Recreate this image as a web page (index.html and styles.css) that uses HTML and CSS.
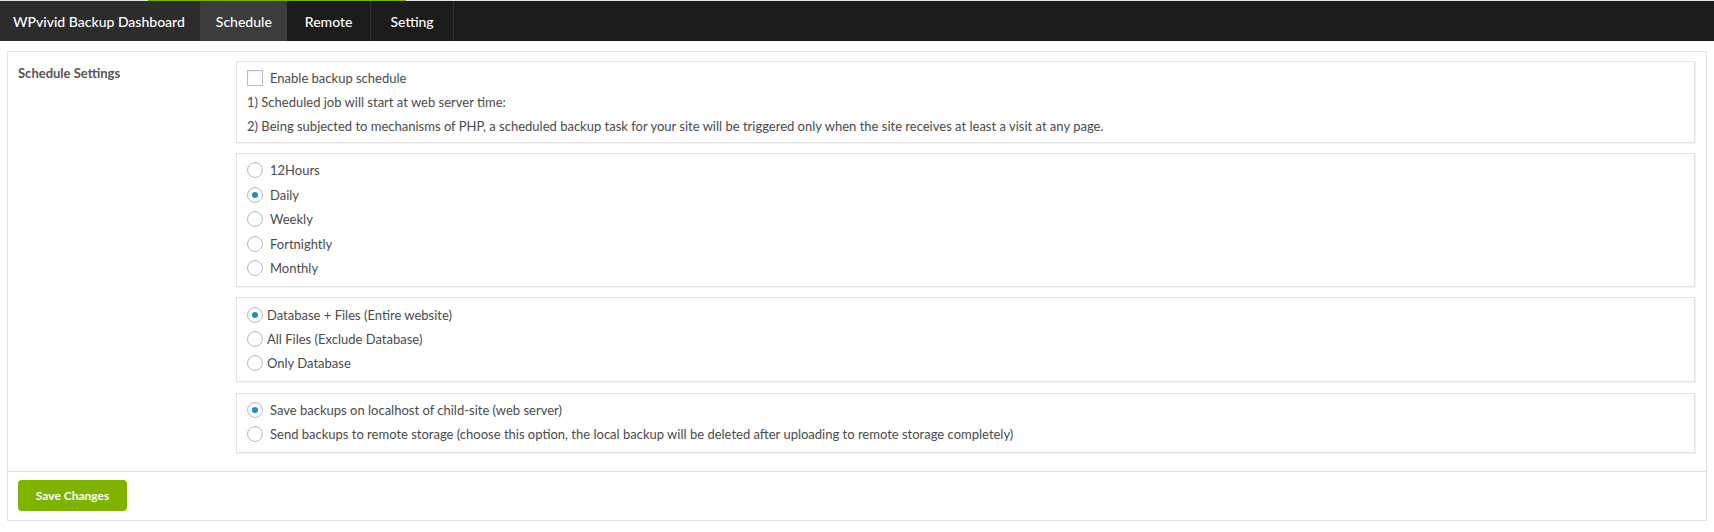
FILE: index.html
```html
<!DOCTYPE html>
<html>
<head>
<meta charset="utf-8">
<link rel="stylesheet" href="styles.css">
</head>
<body>
<div class="topline"><div class="progress"></div></div>
<nav class="nav">
  <a class="tab tab-home">WPvivid Backup Dashboard</a>
  <a class="tab tab-active">Schedule</a>
  <a class="tab tab-remote">Remote</a>
  <a class="tab tab-setting">Setting</a>
</nav>
<div class="page">
  <div class="panel">
    <div class="panel-body">
      <div class="label">Schedule Settings</div>
      <div class="content">
        <div class="card card-enable">
          <div class="row"><input type="checkbox" class="check"><span class="row-text">Enable backup schedule</span></div>
          <div class="row">1) Scheduled job will start at web server time:</div>
          <div class="row">2) Being subjected to mechanisms of PHP, a scheduled backup task for your site will be triggered only when the site receives at least a visit at any page.</div>
        </div>
        <div class="card card-freq">
          <label class="row"><input type="radio" name="f" class="radio"><span class="row-text">12Hours</span></label>
          <label class="row"><input type="radio" name="f" class="radio" checked><span class="row-text">Daily</span></label>
          <label class="row"><input type="radio" name="f" class="radio"><span class="row-text">Weekly</span></label>
          <label class="row"><input type="radio" name="f" class="radio"><span class="row-text">Fortnightly</span></label>
          <label class="row"><input type="radio" name="f" class="radio"><span class="row-text">Monthly</span></label>
        </div>
        <div class="card card-type">
          <label class="row"><input type="radio" name="t" class="radio" checked><span class="row-text tight">Database + Files (Entire website)</span></label>
          <label class="row"><input type="radio" name="t" class="radio"><span class="row-text tight">All Files (Exclude Database)</span></label>
          <label class="row"><input type="radio" name="t" class="radio"><span class="row-text tight">Only Database</span></label>
        </div>
        <div class="card card-dest">
          <label class="row"><input type="radio" name="d" class="radio" checked><span class="row-text">Save backups on localhost of child-site (web server)</span></label>
          <label class="row"><input type="radio" name="d" class="radio"><span class="row-text">Send backups to remote storage (choose this option, the local backup will be deleted after uploading to remote storage completely)</span></label>
        </div>
      </div>
    </div>
    <div class="panel-footer">
      <button class="btn">Save Changes</button>
    </div>
  </div>
</div>
</body>
</html>
```
FILE: styles.css
```css
* { box-sizing: border-box; }
html, body { margin: 0; padding: 0; background: #fff; }
body {
  font-family: Lato, "Open Sans", "Liberation Sans", sans-serif;
  font-size: 13px;
  color: #4a4a4a;
}
.topline {
  height: 1px;
  background: #e4e4e4;
  display: flex;
}
.progress {
  margin-left: 148px;
  width: 258px;
  height: 1px;
  background: #7cb300;
}
.nav {
  display: flex;
  height: 40px;
  background: #1c1c1c;
}
.tab {
  display: flex;
  align-items: center;
  justify-content: center;
  color: #fff;
  font-size: 14px;
  font-weight: 500;
  border-right: 1px solid #303030;
  text-decoration: none;
}
.tab-home { background: #2c2c2c; padding: 0 15px 0 13px; border-right: 0; }
.tab-active { background: #3c3c3c; padding: 0 15px 0 16px; border-right: 0; }
.tab-remote { padding: 0 18px 0 18px; }
.tab-setting { padding: 0 19px 0 19px; }

.page {
  padding: 10px 7px 0 7px;
}
.panel {
  border: 1px solid #e2e2e2;
  height: 470px;
  display: flex;
  flex-direction: column;
}
.panel-body {
  display: flex;
  padding: 9px 11px 18px 10px;
  border-bottom: 1px solid #e0e0e0;
}
.label {
  width: 218px;
  flex: 0 0 218px;
  font-weight: 700;
  color: #555;
  padding-top: 4px;
  line-height: 16px;
}
.content {
  flex: 1;
  display: flex;
  flex-direction: column;
  gap: 10px;
}
.card {
  border: 1px solid #e3e3e3;
  box-shadow: 1px 1px 1px rgba(0, 0, 0, 0.05);
  padding: 4px 10px 4px 10px;
}
.row {
  display: flex;
  align-items: center;
  height: 24px;
  white-space: nowrap;
}
.card-freq { padding: 4px 10px 5px 10px; }
.card-freq .row { height: 24.5px; }
.card-type { padding: 5px 10px 6px 10px; }
.card-dest { padding: 4px 10px 5px 10px; margin-top: 1px; }
.card-dest .row { height: 24.5px; }

.row-text { margin-left: 7px; }
.row-text.tight { margin-left: 4px; }

.check, .radio {
  -webkit-appearance: none;
  appearance: none;
  margin: 0;
  width: 16px;
  height: 16px;
  flex: 0 0 16px;
  border: 1px solid #b8bcc0;
  background: #fff;
  box-shadow: inset 0 1px 2px rgba(0, 0, 0, 0.07);
  position: relative;
}
.check { border-radius: 0; }
.radio { border-radius: 50%; }
.radio:checked::before {
  content: "";
  position: absolute;
  left: 50%;
  top: 50%;
  width: 6px;
  height: 6px;
  margin: -3px 0 0 -3px;
  border-radius: 50%;
  background: #1e8cbe;
}

.panel-footer {
  padding: 8px 10px 7px 10px;
}
.btn {
  width: 109px;
  height: 31px;
  border: 0;
  border-radius: 4px;
  background: #80b200;
  color: #fff;
  font-family: Lato, "Liberation Sans", sans-serif;
  font-size: 12px;
  font-weight: 700;
}
```
